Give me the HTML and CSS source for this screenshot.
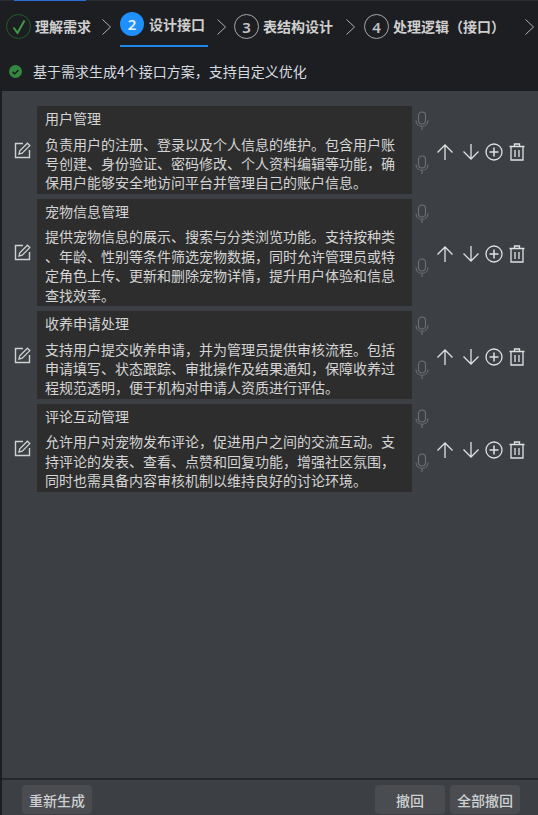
FILE: index.html
```html
<!DOCTYPE html>
<html lang="zh-CN">
<head>
    <meta charset="UTF-8">
    <meta name="viewport" content="width=device-width, initial-scale=1.0">
    <title>设计接口</title>
    <link rel="stylesheet" href="styles.css">
</head>
<body>
    <svg class="sprites" width="0" height="0">
        <symbol id="i-chevron" viewBox="0 0 9 16"><path d="M.5.5L8.500 8 .5 15.500" fill="none" stroke="currentColor" stroke-width="1"/></symbol>
        <symbol id="i-edit" viewBox="0 0 18 18"><path d="M9 2.500H1.500v14h14V9" fill="none" stroke="currentColor" stroke-width="1.400"/><path d="M5 13l.8-3.200L13.400 2.200l2.400 2.400-7.600 7.600z" fill="none" stroke="currentColor" stroke-width="1.300"/></symbol>
        <symbol id="i-mic" viewBox="0 0 14 20"><rect x="3.500" y="1" width="7" height="12" rx="3.500" fill="none" stroke="currentColor" stroke-width="1.100"/><path d="M1 9.500c0 3.500 2.600 5.800 6 5.800s6-2.300 6-5.800M7 15.300V19" fill="none" stroke="currentColor" stroke-width="1.100"/></symbol>
        <symbol id="i-up" viewBox="0 0 18 18"><path d="M9 17V2M1.500 9.500L9 2l7.500 7.500" fill="none" stroke="currentColor" stroke-width="1.300"/></symbol>
        <symbol id="i-down" viewBox="0 0 18 18"><path d="M9 1v15M1.500 8.500L9 16l7.500-7.500" fill="none" stroke="currentColor" stroke-width="1.300"/></symbol>
        <symbol id="i-add" viewBox="0 0 18 18"><circle cx="9" cy="9" r="8" fill="none" stroke="currentColor" stroke-width="1.300"/><path d="M9 4.500v9M4.500 9h9" fill="none" stroke="currentColor" stroke-width="1.500"/></symbol>
        <symbol id="i-trash" viewBox="0 0 16 18"><path d="M.5 3.500h15M5.500 3.500V1h5v2.500M2 3.500V17h12V3.500M6 7v7M10 7v7" fill="none" stroke="currentColor" stroke-width="1.300"/></symbol>
    </svg>

    <div class="top-line"><div class="top-line-active"></div></div>

    <header class="steps">
        <div class="step">
            <span class="step-num step-done"><svg width="14" height="16" viewBox="0 0 14 16"><path d="M1.500 8.500L5.500 14 12.500 1.500" fill="none" stroke="#3f9a47" stroke-width="2"/></svg></span>
            <span class="step-name">理解需求</span>
        </div>
        <svg class="chevron"><use href="#i-chevron"/></svg>
        <div class="step step-active">
            <span class="step-num">2</span>
            <span class="step-name">设计接口</span>
        </div>
        <svg class="chevron"><use href="#i-chevron"/></svg>
        <div class="step step-wide">
            <span class="step-num">3</span>
            <span class="step-name">表结构设计</span>
        </div>
        <svg class="chevron"><use href="#i-chevron"/></svg>
        <div class="step step-last">
            <span class="step-num">4</span>
            <span class="step-name">处理逻辑（接口）</span>
        </div>
        <svg class="chevron"><use href="#i-chevron"/></svg>
    </header>

    <div class="notice">
        <svg width="13" height="13" viewBox="0 0 13 13"><circle cx="6.500" cy="6.500" r="6.500" fill="#32893d"/><path d="M3.500 6.800l2.100 2.100 3.900-4" fill="none" stroke="#1d1e22" stroke-width="1.500"/></svg>
        <span>基于需求生成4个接口方案，支持自定义优化</span>
    </div>

    <main class="panel">
        <div class="plans">
            <section class="plan">
                <svg class="edit"><use href="#i-edit"/></svg>
                <div class="plan-text">
                    <h3>用户管理</h3>
                    <p>负责用户的注册、登录以及个人信息的维护。包含用户账号创建、身份验证、密码修改、个人资料编辑等功能，确保用户能够安全地访问平台并管理自己的账户信息。</p>
                </div>
                <div class="mics">
                    <div class="mic-title"><svg class="mic"><use href="#i-mic"/></svg></div>
                    <div class="mic-body"><svg class="mic"><use href="#i-mic"/></svg></div>
                </div>
                <div class="tools">
                    <svg class="tool tool-up"><use href="#i-up"/></svg>
                    <svg class="tool"><use href="#i-down"/></svg>
                    <svg class="tool"><use href="#i-add"/></svg>
                    <svg class="tool"><use href="#i-trash"/></svg>
                </div>
            </section>
            <section class="plan">
                <svg class="edit"><use href="#i-edit"/></svg>
                <div class="plan-text">
                    <h3>宠物信息管理</h3>
                    <p>提供宠物信息的展示、搜索与分类浏览功能。支持按种类、年龄、性别等条件筛选宠物数据，同时允许管理员或特定角色上传、更新和删除宠物详情，提升用户体验和信息查找效率。</p>
                </div>
                <div class="mics">
                    <div class="mic-title"><svg class="mic"><use href="#i-mic"/></svg></div>
                    <div class="mic-body"><svg class="mic"><use href="#i-mic"/></svg></div>
                </div>
                <div class="tools">
                    <svg class="tool tool-up"><use href="#i-up"/></svg>
                    <svg class="tool"><use href="#i-down"/></svg>
                    <svg class="tool"><use href="#i-add"/></svg>
                    <svg class="tool"><use href="#i-trash"/></svg>
                </div>
            </section>
            <section class="plan">
                <svg class="edit"><use href="#i-edit"/></svg>
                <div class="plan-text">
                    <h3>收养申请处理</h3>
                    <p>支持用户提交收养申请，并为管理员提供审核流程。包括申请填写、状态跟踪、审批操作及结果通知，保障收养过程规范透明，便于机构对申请人资质进行评估。</p>
                </div>
                <div class="mics">
                    <div class="mic-title"><svg class="mic"><use href="#i-mic"/></svg></div>
                    <div class="mic-body"><svg class="mic"><use href="#i-mic"/></svg></div>
                </div>
                <div class="tools">
                    <svg class="tool tool-up"><use href="#i-up"/></svg>
                    <svg class="tool"><use href="#i-down"/></svg>
                    <svg class="tool"><use href="#i-add"/></svg>
                    <svg class="tool"><use href="#i-trash"/></svg>
                </div>
            </section>
            <section class="plan">
                <svg class="edit"><use href="#i-edit"/></svg>
                <div class="plan-text">
                    <h3>评论互动管理</h3>
                    <p>允许用户对宠物发布评论，促进用户之间的交流互动。支持评论的发表、查看、点赞和回复功能，增强社区氛围，同时也需具备内容审核机制以维持良好的讨论环境。</p>
                </div>
                <div class="mics">
                    <div class="mic-title"><svg class="mic"><use href="#i-mic"/></svg></div>
                    <div class="mic-body"><svg class="mic"><use href="#i-mic"/></svg></div>
                </div>
                <div class="tools">
                    <svg class="tool tool-up"><use href="#i-up"/></svg>
                    <svg class="tool"><use href="#i-down"/></svg>
                    <svg class="tool"><use href="#i-add"/></svg>
                    <svg class="tool"><use href="#i-trash"/></svg>
                </div>
            </section>
        </div>
        <footer class="actions">
            <button type="button" class="btn">重新生成</button>
            <div class="actions-right">
                <button type="button" class="btn">撤回</button>
                <button type="button" class="btn">全部撤回</button>
            </div>
        </footer>
    </main>
</body>
</html>
```

FILE: styles.css
```css
body {
    margin: 0;
    height: 815px;
    overflow: hidden;
    display: flex;
    flex-direction: column;
    background-color: #1d1e22;
    color: #d4d4d4;
    font-family: "Noto Sans CJK SC", "Noto Sans", sans-serif;
    font-size: 14px;
}
.sprites {
    position: absolute;
}
.top-line {
    height: 1px;
    background-color: #2a2b30;
}
.top-line-active {
    width: 72px;
    height: 1px;
    margin-left: 14px;
    background-color: #2a6fd8;
}

/* Barra de etapas */
.steps {
    height: 46px;
    padding-left: 6px;
    display: flex;
    align-items: flex-start;
}
.step {
    flex: none;
    height: 46px;
    padding: 13px 2px 0 0;
    box-sizing: border-box;
    display: flex;
    align-items: flex-start;
    gap: 4px;
}
.step-active {
    border-bottom: 2px solid #1f87e8;
    padding: 11px 3px 0 0;
    gap: 5px;
}
.step-wide {
    margin-left: -1px;
    padding-right: 4px;
}
.step-last {
    padding-right: 11px;
}
.step-num {
    flex: none;
    width: 25px;
    height: 25px;
    box-sizing: border-box;
    border: 1px solid #a8a8a8;
    border-radius: 50%;
    display: flex;
    align-items: center;
    justify-content: center;
    font-family: "Noto Sans", sans-serif;
    font-size: 15px;
    font-weight: 600;
    color: #c4c4c4;
}
.step-done {
    border-color: #1f5c28;
}
.step-active .step-num {
    width: 24px;
    height: 24px;
    border: none;
    background-color: #1e90ff;
    color: #e8f2ff;
}
.step-name {
    white-space: nowrap;
    line-height: 25px;
    font-weight: 700;
    color: #cfcfcf;
}
.step-active .step-name {
    line-height: 24px;
}
.chevron {
    flex: none;
    width: 9px;
    height: 16px;
    margin: 18px 9px 0;
    color: #b0b0b0;
}

/* Aviso */
.notice {
    height: 40px;
    padding: 4px 0 0 9px;
    display: flex;
    align-items: center;
    gap: 11px;
    color: #d6dbe0;
}

/* Painel */
.panel {
    flex: 1;
    margin-left: 2px;
    display: flex;
    flex-direction: column;
    background-color: #3c4044;
}
.plans {
    flex: 1;
    padding-top: 15px;
    display: flex;
    flex-direction: column;
    gap: 5px;
}
.plan {
    display: flex;
    align-items: center;
}
.edit {
    flex: none;
    width: 18px;
    height: 18px;
    margin: 0 5px 0 12px;
    color: #d0d0d0;
}
.plan-text {
    width: 375px;
    box-sizing: border-box;
    padding: 3px 8px 1px;
    background-color: #2d2d2d;
}
.plan-text h3 {
    margin: 0 0 6px;
    font-size: 14px;
    font-weight: 400;
    line-height: 19.600px;
    color: #d4d4d4;
}
.plan-text p {
    margin: 0;
    line-height: 19.400px;
    color: #d4d4d4;
    line-break: anywhere;
}
.mics {
    align-self: stretch;
    width: 21px;
    display: flex;
    flex-direction: column;
    color: #6e7174;
}
.mic-title {
    height: 29px;
    padding-top: 1px;
    box-sizing: border-box;
    display: flex;
    align-items: center;
}
.mic-body {
    flex: 1;
    padding-top: 2px;
    display: flex;
    align-items: center;
}
.mic {
    width: 14px;
    height: 20px;
    margin-left: 3px;
}
.tools {
    margin-left: 3px;
    padding-top: 4px;
    display: flex;
    align-items: center;
    gap: 5px;
    color: #e0e0e0;
}
.tool {
    width: 18px;
    height: 18px;
}
.tool-up {
    margin-right: 3px;
}

/* Rodape */
.actions {
    height: 37px;
    box-sizing: border-box;
    border-top: 2px solid #25272a;
    padding: 5px 18px 0 20px;
    display: flex;
    justify-content: space-between;
    align-items: flex-start;
}
.actions-right {
    display: flex;
    gap: 5px;
}
.btn {
    width: 70px;
    height: 29px;
    padding: 0;
    border: none;
    border-radius: 4px;
    background-color: #4a4c4f;
    color: #cfd2d4;
    font-family: inherit;
    font-size: 14px;
    font-weight: 500;
}
```
